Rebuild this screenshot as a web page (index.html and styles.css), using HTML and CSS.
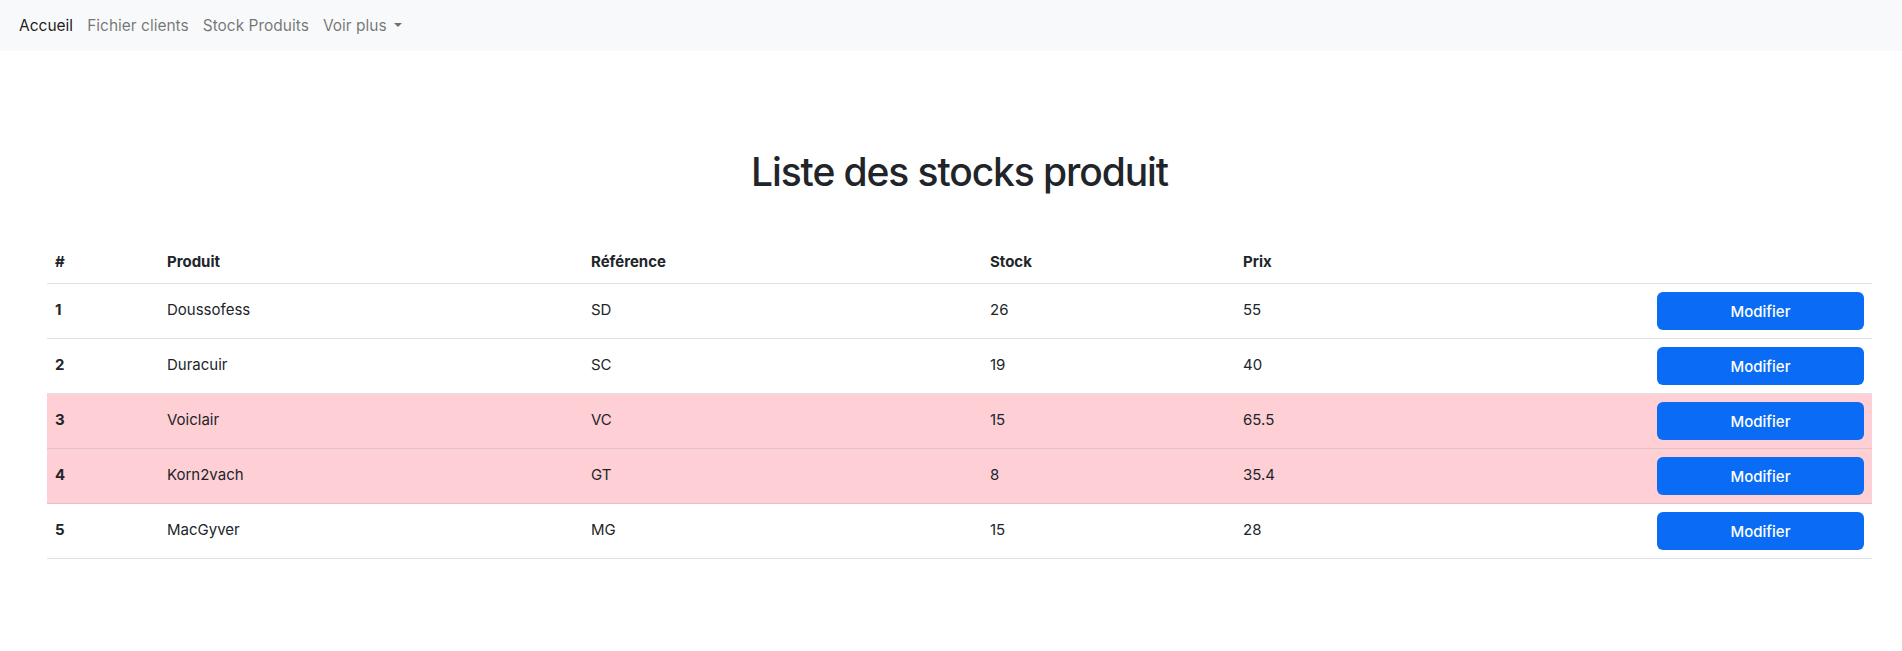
FILE: index.html
```html
<!DOCTYPE html>
<html lang="fr">
<head>
<meta charset="utf-8">
<title>Liste des stocks produit</title>
<link rel="stylesheet" href="styles.css">
</head>
<body>
<nav class="navbar">
  <a class="nav-link active" href="#">Accueil</a>
  <a class="nav-link" href="#">Fichier clients</a>
  <a class="nav-link" href="#">Stock Produits</a>
  <a class="nav-link dropdown-toggle" href="#">Voir plus</a>
</nav>
<main class="content">
  <h1 class="title">Liste des stocks produit</h1>
  <table class="table">
    <colgroup>
      <col class="c-num"><col class="c-prod"><col class="c-ref"><col class="c-stock"><col class="c-prix"><col class="c-act">
    </colgroup>
    <thead>
      <tr><th>#</th><th>Produit</th><th>Référence</th><th>Stock</th><th>Prix</th><th></th></tr>
    </thead>
    <tbody>
      <tr><th>1</th><td>Doussofess</td><td>SD</td><td>26</td><td>55</td><td class="act"><button class="btn">Modifier</button></td></tr>
      <tr><th>2</th><td>Duracuir</td><td>SC</td><td>19</td><td>40</td><td class="act"><button class="btn">Modifier</button></td></tr>
      <tr class="danger"><th>3</th><td>Voiclair</td><td>VC</td><td>15</td><td>65.5</td><td class="act"><button class="btn">Modifier</button></td></tr>
      <tr class="danger"><th>4</th><td>Korn2vach</td><td>GT</td><td>8</td><td>35.4</td><td class="act"><button class="btn">Modifier</button></td></tr>
      <tr><th>5</th><td>MacGyver</td><td>MG</td><td>15</td><td>28</td><td class="act"><button class="btn">Modifier</button></td></tr>
    </tbody>
  </table>
</main>
</body>
</html>
```
FILE: styles.css
```css
* { box-sizing: border-box; }
html, body {
  margin: 0;
  font-family: Inter, "Noto Sans", "Liberation Sans", sans-serif;
  font-size: 16px;
  line-height: 1.5;
  color: #212529;
  background: #fff;
}
.navbar {
  display: flex;
  align-items: center;
  height: 51px;
  padding: 0 12px;
  background: #f8f9fa;
}
.nav-link {
  padding: 0 7px;
  color: rgba(0, 0, 0, 0.55);
  text-decoration: none;
  font-size: 15.5px;
}
.nav-link.active { color: rgba(0, 0, 0, 0.9); }
.dropdown-toggle::after {
  content: "";
  display: inline-block;
  margin-left: 0.45em;
  vertical-align: 0.255em;
  border-top: 0.3em solid;
  border-right: 0.3em solid transparent;
  border-left: 0.3em solid transparent;
}
.content {
  padding: 97px 30px 0 47px;
}
.title {
  margin: 0 0 46px;
  height: 48px;
  text-align: center;
  font-size: 39px;
  font-weight: 500;
  letter-spacing: -1.1px;
  line-height: 48px;
}
.table {
  width: 100%;
  border-collapse: collapse;
  table-layout: fixed;
}
.c-num { width: 112px; }
.c-prod { width: 424px; }
.c-ref { width: 399px; }
.c-stock { width: 253px; }
.c-prix { width: 414px; }
.c-act { width: 223px; }
.table th, .table td {
  padding: 8px;
  text-align: left;
  vertical-align: middle;
  border-bottom: 1px solid #dee2e6;
  font-size: 15px;
  height: 55px;
}
.table thead th {
  height: 41px;
  font-weight: 700;
}
.table tbody th { font-weight: 700; }
.table tr.danger th, .table tr.danger td {
  background: #fecfd5;
  border-bottom-color: #e2c1c5;
}
.act { text-align: right; }
.btn {
  display: block;
  width: 207px;
  height: 38px;
  margin-left: auto;
  border: 0;
  border-radius: 6px;
  background: #0a6cf5;
  color: #fff;
  font-family: inherit;
  font-size: 15px;
  font-weight: 500;
  line-height: 38px;
}
```
